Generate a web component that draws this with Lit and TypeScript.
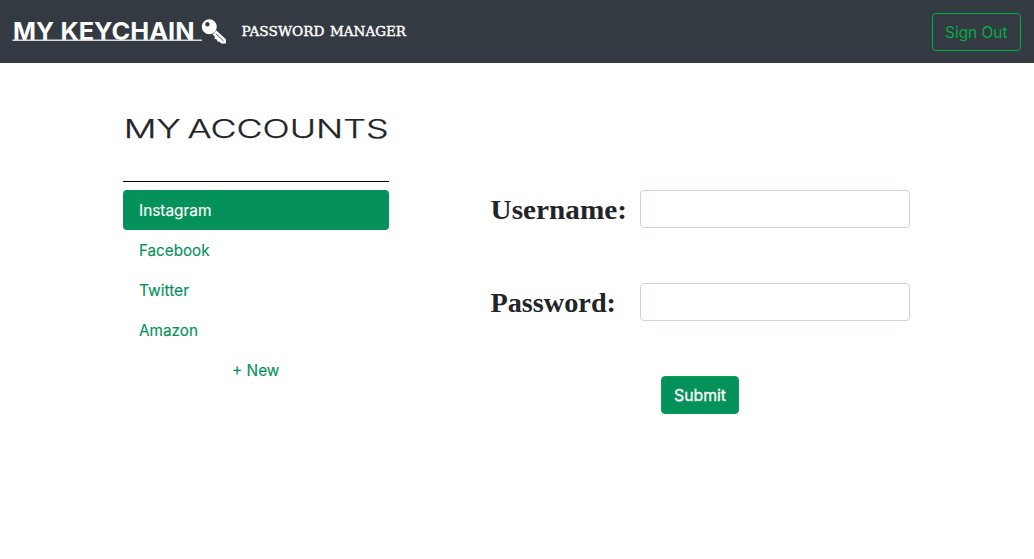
import { LitElement, html, css, svg } from "lit";
import { customElement, state } from "lit/decorators.js";

@customElement("app-navbar")
class AppNavbar extends LitElement {
  static styles = css`
    :host { display: block; }
    .bar { display: flex; align-items: center; box-sizing: border-box; height: 63px; padding: 0 13px 0 12px; background: #343a42; }
    .logo { display: block; width: 216px; height: 30px; }
    .tagline { display: block; width: 168px; height: 20px; margin-left: 13px; }
    .logo-text { font: 700 24px Inter, sans-serif; fill: #fff; }
    .tag-text { font: 400 13px "DejaVu Serif", serif; fill: #fff; stroke: #fff; stroke-width: 0.4; }
    .out { margin-left: auto; box-sizing: border-box; width: 89px; height: 38px; padding: 0; border: 1px solid #04ac4a; border-radius: 4px; background: transparent; }
    .out svg { display: block; width: 87px; height: 36px; }
    .out text { font: 400 16px Inter, sans-serif; fill: #04ac4a; }
  `;
  render() {
    return html`<nav class="bar">
      <svg class="logo" viewBox="0 0 216 30">
        <text class="logo-text" x="1" y="23" textLength="41" lengthAdjust="spacingAndGlyphs">MY</text>
        <text class="logo-text" x="48.5" y="23" textLength="134" lengthAdjust="spacingAndGlyphs">KEYCHAIN</text>
        <path d="M0.5 23.3H190" stroke="#d9dbdd" stroke-width="1.5" />
        <path fill="#fff" fill-rule="evenodd" d="M197.3 2.3a7.5 7.5 0 1 0 0 15a7.5 7.5 0 0 0 0-15zM195.4 5a2.2 2.2 0 1 1 0 4.4a2.2 2.2 0 0 1 0-4.4z" />
        <path fill="#fff" d="M204.4 13.6L213.9 22.3V26.6H209.2L207.8 24.9L205.6 24.5L204.8 22.4L202.6 21.8L202.8 19.5L200.6 17.6z" />
        <path d="M203.9 16.9L211.6 23.9" stroke="#343a42" stroke-width="0.9" />
      </svg>
      <svg class="tagline" viewBox="0 0 168 20">
        <text class="tag-text" x="0.5" y="14.4" textLength="83" lengthAdjust="spacingAndGlyphs">PASSWORD</text>
        <text class="tag-text" x="89" y="14.4" textLength="76" lengthAdjust="spacingAndGlyphs">MANAGER</text>
      </svg>
      <button class="out"><svg viewBox="0 0 87 36"><text x="12" y="24" textLength="62.5" lengthAdjust="spacingAndGlyphs">Sign Out</text></svg></button>
    </nav>`;
  }
}

@customElement("account-list")
class AccountList extends LitElement {
  @state() selected = "Instagram";
  accounts = [
    { name: "Instagram", width: 72.5 },
    { name: "Facebook", width: 70.5 },
    { name: "Twitter", width: 50 },
    { name: "Amazon", width: 59 },
  ];
  static styles = css`
    :host { display: block; width: 266px; }
    .title { display: block; width: 266px; height: 40px; margin: 46px 0 32px; }
    .title text { font: 300 25.5px Inter, sans-serif; fill: #212529; stroke: #212529; stroke-width: 0.25; }
    .rule { height: 1px; background: #000; margin-bottom: 8px; }
    .item { display: flex; align-items: center; box-sizing: border-box; height: 40px; padding: 0 16px; border-radius: 4px; cursor: pointer; }
    .item svg { display: block; width: 76px; height: 40px; }
    .item text { font: 400 16px Inter, sans-serif; fill: #04925a; stroke: #04925a; stroke-width: 0.15; }
    .active { background: #04925a; }
    .active text { fill: #fff; stroke: #fff; }
    .new { justify-content: center; }
    .new svg { width: 49px; overflow: visible; }
  `;
  label(text: string, width: number) {
    return html`<svg>${svg`<text x="0" y="26" textLength=${width} lengthAdjust="spacingAndGlyphs">${text}</text>`}</svg>`;
  }
  render() {
    return html`
      <svg class="title" viewBox="0 0 266 40">
        <text x="0.8" y="29" textLength="57" lengthAdjust="spacingAndGlyphs">MY</text>
        <text x="64.5" y="29" textLength="201" lengthAdjust="spacingAndGlyphs">ACCOUNTS</text>
      </svg>
      <div class="rule"></div>
      ${this.accounts.map(
        (a) => html`<div class="item ${a.name === this.selected ? "active" : ""}" @click=${() => (this.selected = a.name)}>${this.label(a.name, a.width)}</div>`
      )}
      <div class="item new">${this.label("+ New", 47.5)}</div>
    `;
  }
}

@customElement("credential-form")
class CredentialForm extends LitElement {
  static styles = css`
    :host { display: block; width: 420px; padding-top: 127px; }
    .row { display: flex; height: 38px; margin-bottom: 55px; }
    .label { display: block; width: 150px; height: 38px; }
    .label text { font: 700 27.5px "Liberation Serif", serif; fill: #212529; }
    .field { box-sizing: border-box; width: 270px; height: 38px; padding: 6px 12px; border: 1px solid #ccd3de; border-radius: 4px; background: #fff; font: 16px Inter, sans-serif; outline: none; }
    .submit { display: block; box-sizing: border-box; width: 78px; height: 38px; margin: 0 auto; padding: 0; border: 1px solid #04a04e; border-radius: 4px; background: #04925a; }
    .submit svg { display: block; width: 76px; height: 36px; }
    .submit text { font: 400 16px Inter, sans-serif; fill: #fff; stroke: #fff; stroke-width: 0.3; }
  `;
  field(text: string, width: number, type: string) {
    return html`<div class="row">
      <svg class="label" viewBox="0 0 150 38"><text x="0.5" y="29" textLength=${width} lengthAdjust="spacingAndGlyphs">${text}</text></svg>
      <input class="field" type=${type} aria-label=${text} />
    </div>`;
  }
  render() {
    return html`
      ${this.field("Username:", 136.5, "text")} ${this.field("Password:", 125.5, "password")}
      <button class="submit"><svg viewBox="0 0 76 36"><text x="12" y="24" textLength="52" lengthAdjust="spacingAndGlyphs">Submit</text></svg></button>
    `;
  }
}

@customElement("app-root")
class AppRoot extends LitElement {
  static styles = css`
    :host { display: block; min-height: 559px; background: #fff; }
    .content { display: flex; gap: 101px; padding-left: 123px; }
  `;
  render() {
    return html`<app-navbar></app-navbar>
      <main class="content"><account-list></account-list><credential-form></credential-form></main>`;
  }
}
